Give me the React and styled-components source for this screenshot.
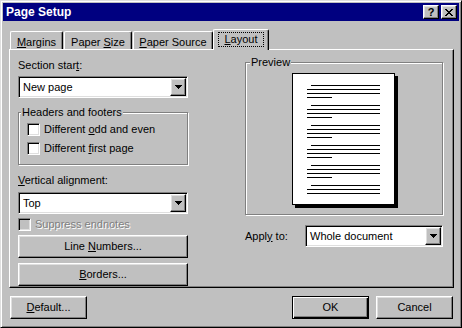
import React from 'react';
import styled, { createGlobalStyle, css } from 'styled-components';

const GlobalStyle = createGlobalStyle`
  html, body { margin: 0; padding: 0; background: #c0c0c0; }
  * { box-sizing: border-box; }
`;

const raised = css`
  border: 1px solid;
  border-color: #fff #000 #000 #fff;
  box-shadow: inset -1px -1px #808080, inset 1px 1px #dfdfdf;
`;

const sunken = css`
  border: 1px solid;
  border-color: #808080 #fff #fff #808080;
  box-shadow: inset 1px 1px #000, inset -1px -1px #dfdfdf;
`;

const Window = styled.div`
  width: 462px;
  height: 328px;
  padding: 2px;
  display: flex;
  flex-direction: column;
  background: #c0c0c0;
  border: 1px solid;
  border-color: #dfdfdf #000 #000 #dfdfdf;
  box-shadow: inset 1px 1px #fff, inset -1px -1px #808080;
  color: #000;
  font: 11px/13px "Liberation Sans", Arial, sans-serif;
`;

const TitleBar = styled.div`
  height: 18px;
  flex: none;
  display: flex;
  align-items: center;
  justify-content: space-between;
  padding: 0 2px 0 3px;
  background: #000080;
`;

const Title = styled.span`
  color: #fff;
  font: bold 12px "Liberation Sans", Arial, sans-serif;
`;

const TitleButtons = styled.div`
  display: flex;
  gap: 2px;
`;

const TitleButton = styled.div`
  ${raised};
  width: 16px;
  height: 14px;
  display: flex;
  align-items: center;
  justify-content: center;
  background: #c0c0c0;
  font: bold 11px "Liberation Sans", Arial, sans-serif;
`;

const Body = styled.div`
  flex: 1;
  display: flex;
  flex-direction: column;
  padding: 8px 5px 0 6px;
`;

const TabRow = styled.div`
  height: 20px;
  display: flex;
  align-items: flex-end;
  gap: 1px;
  padding-left: 1px;
`;

const Tab = styled.div`
  width: ${p => p.$w}px;
  height: 18px;
  padding-top: 4px;
  text-align: center;
  background: #c0c0c0;
  border-top: 1px solid #fff;
  border-left: 1px solid #fff;
  border-right: 1px solid #000;
  border-radius: 2px 2px 0 0;
  box-shadow: inset -1px 0 #808080;
  ${p => p.$active && css`
    height: 21px;
    margin: 0 0 -1px -1px;
    padding-top: 2px;
    position: relative;
    z-index: 1;
  `}
`;

const Focus = styled.span`
  display: inline-block;
  padding: 0 5px;
  border: 1px dotted #000;
`;

const Panel = styled.div`
  height: 239px;
  display: flex;
  padding: 6px 0 0 8px;
  border: 1px solid;
  border-color: #fff #000 #000 #fff;
  box-shadow: inset -1px -1px #808080;
`;

const LeftCol = styled.div`
  width: 170px;
  margin-top: 3px;
  display: flex;
  flex-direction: column;
`;

const RightCol = styled.div`
  width: 198px;
  margin-left: 57px;
  display: flex;
  flex-direction: column;
`;

const Label = styled.div`
  height: 13px;
  margin: ${p => p.$m || '0'};
`;

const Select = styled.div`
  ${sunken};
  height: 22px;
  padding: 1px;
  display: flex;
  align-items: center;
  background: #fff;
  ${p => p.$grow && 'flex: 1;'}
`;

const SelectValue = styled.span`
  flex: 1;
  padding-left: 3px;
`;

const ArrowButton = styled.div`
  ${raised};
  width: 16px;
  height: 18px;
  display: flex;
  align-items: center;
  justify-content: center;
  background: #c0c0c0;
`;

const Group = styled.fieldset`
  margin: ${p => p.$m || '0'};
  padding: ${p => p.$pad};
  min-width: 0;
  border: 1px solid #808080;
  box-shadow: inset 1px 1px #fff, 1px 1px #fff;
  ${p => p.$center && css`
    display: flex;
    justify-content: center;
  `}
`;

const Legend = styled.legend`
  margin-left: ${p => p.$ml}px;
  padding: 0 1px;
  background: #c0c0c0;
  line-height: 13px;
`;

const CheckRow = styled.div`
  height: 13px;
  display: flex;
  align-items: center;
  gap: 4px;
  margin-top: ${p => p.$mt || 0}px;
  ${p => p.$disabled && css`
    color: #808080;
    text-shadow: 1px 1px #fff;
  `}
`;

const Box = styled.span`
  ${sunken};
  width: 13px;
  height: 13px;
  flex: none;
  background: ${p => (p.$disabled ? '#c0c0c0' : '#fff')};
`;

const Button = styled.div`
  ${raised};
  width: ${p => (p.$w ? `${p.$w}px` : 'auto')};
  height: 23px;
  margin-top: ${p => p.$mt || 0}px;
  display: flex;
  align-items: center;
  justify-content: center;
  background: #c0c0c0;
  ${p => p.$default && css`
    border: 1px solid #000;
    box-shadow: inset 1px 1px #fff, inset -1px -1px #000, inset -2px -2px #808080;
  `}
`;

const ApplyRow = styled.div`
  display: flex;
  align-items: center;
  margin-top: 10px;
`;

const ApplyLabel = styled.span`
  width: 60px;
`;

const Footer = styled.div`
  display: flex;
  margin-top: 8px;
  padding: 0 1px;
`;

const Right = styled.div`
  margin-left: auto;
  display: flex;
  gap: 7px;
`;

const Arrow = () => (
  <svg width="7" height="4" viewBox="0 0 7 4">
    <rect x="0" y="0" width="7" height="1" />
    <rect x="1" y="1" width="5" height="1" />
    <rect x="2" y="2" width="3" height="1" />
    <rect x="3" y="3" width="1" height="1" />
  </svg>
);

const CloseIcon = () => (
  <svg width="8" height="7" viewBox="0 0 8 7" shapeRendering="crispEdges">
    <path d="M0 0h2v1h-2zM6 0h2v1h-2zM1 1h2v1h-2zM5 1h2v1h-2zM2 2h4v1h-4zM3 3h2v1h-2zM2 4h4v1h-4zM1 5h2v1h-2zM5 5h2v1h-2zM0 6h2v1h-2zM6 6h2v1h-2z" />
  </svg>
);

const paragraphs = [4, 4, 4, 4, 4, 3];

const PagePreview = () => {
  const lines = [];
  paragraphs.forEach((count, p) => {
    for (let i = 0; i < count; i++) {
      const y = 12 + p * 20 + i * 4;
      let x = 15;
      let w = 73;
      if (i === 0) { x = 19; w = 69; }
      else if (i === 3) { w = 25; }
      lines.push(<rect key={`${p}-${i}`} x={x} y={y} width={w} height="1" />);
    }
  });
  return (
    <svg width="106" height="135" viewBox="0 0 106 135" shapeRendering="crispEdges">
      <rect x="103" y="3" width="3" height="132" fill="#000" />
      <rect x="3" y="132" width="103" height="3" fill="#000" />
      <rect x="0.5" y="0.5" width="102" height="131" fill="#fff" stroke="#000" />
      <g fill="#000">{lines}</g>
    </svg>
  );
};

const SelectBox = ({ value, grow }) => (
  <Select $grow={grow}>
    <SelectValue>{value}</SelectValue>
    <ArrowButton><Arrow /></ArrowButton>
  </Select>
);

export default function App() {
  return (
    <>
      <GlobalStyle />
      <Window>
        <TitleBar>
          <Title>Page Setup</Title>
          <TitleButtons>
            <TitleButton>?</TitleButton>
            <TitleButton><CloseIcon /></TitleButton>
          </TitleButtons>
        </TitleBar>
        <Body>
          <TabRow>
            <Tab $w={53}><u>M</u>argins</Tab>
            <Tab $w={68}>Paper <u>S</u>ize</Tab>
            <Tab $w={80}><u>P</u>aper Source</Tab>
            <Tab $w={56} $active><Focus><u>L</u>ayout</Focus></Tab>
          </TabRow>
          <Panel>
            <LeftCol>
              <Label $m="0 0 4px">Section star<u>t</u>:</Label>
              <SelectBox value="New page" />
              <Group $m="8px 0 0" $pad="4px 0 9px 8px">
                <Legend $ml={-6}>Headers and footers</Legend>
                <CheckRow><Box /><span>Different <u>o</u>dd and even</span></CheckRow>
                <CheckRow $mt={6}><Box /><span>Different <u>f</u>irst page</span></CheckRow>
              </Group>
              <Label $m="9px 0 5px"><u>V</u>ertical alignment:</Label>
              <SelectBox value="Top" />
              <CheckRow $mt={4} $disabled><Box $disabled /><span>Suppress endnotes</span></CheckRow>
              <Button $mt={4}><span>Line <u>N</u>umbers...</span></Button>
              <Button $mt={5}><span><u>B</u>orders...</span></Button>
            </LeftCol>
            <RightCol>
              <Group $pad="4px 0 6px 2px" $center>
                <Legend $ml={2}>Preview</Legend>
                <PagePreview />
              </Group>
              <ApplyRow>
                <ApplyLabel>Appl<u>y</u> to:</ApplyLabel>
                <SelectBox value="Whole document" grow />
              </ApplyRow>
            </RightCol>
          </Panel>
          <Footer>
            <Button $w={77}><span><u>D</u>efault...</span></Button>
            <Right>
              <Button $w={77} $default>OK</Button>
              <Button $w={77}>Cancel</Button>
            </Right>
          </Footer>
        </Body>
      </Window>
    </>
  );
}
